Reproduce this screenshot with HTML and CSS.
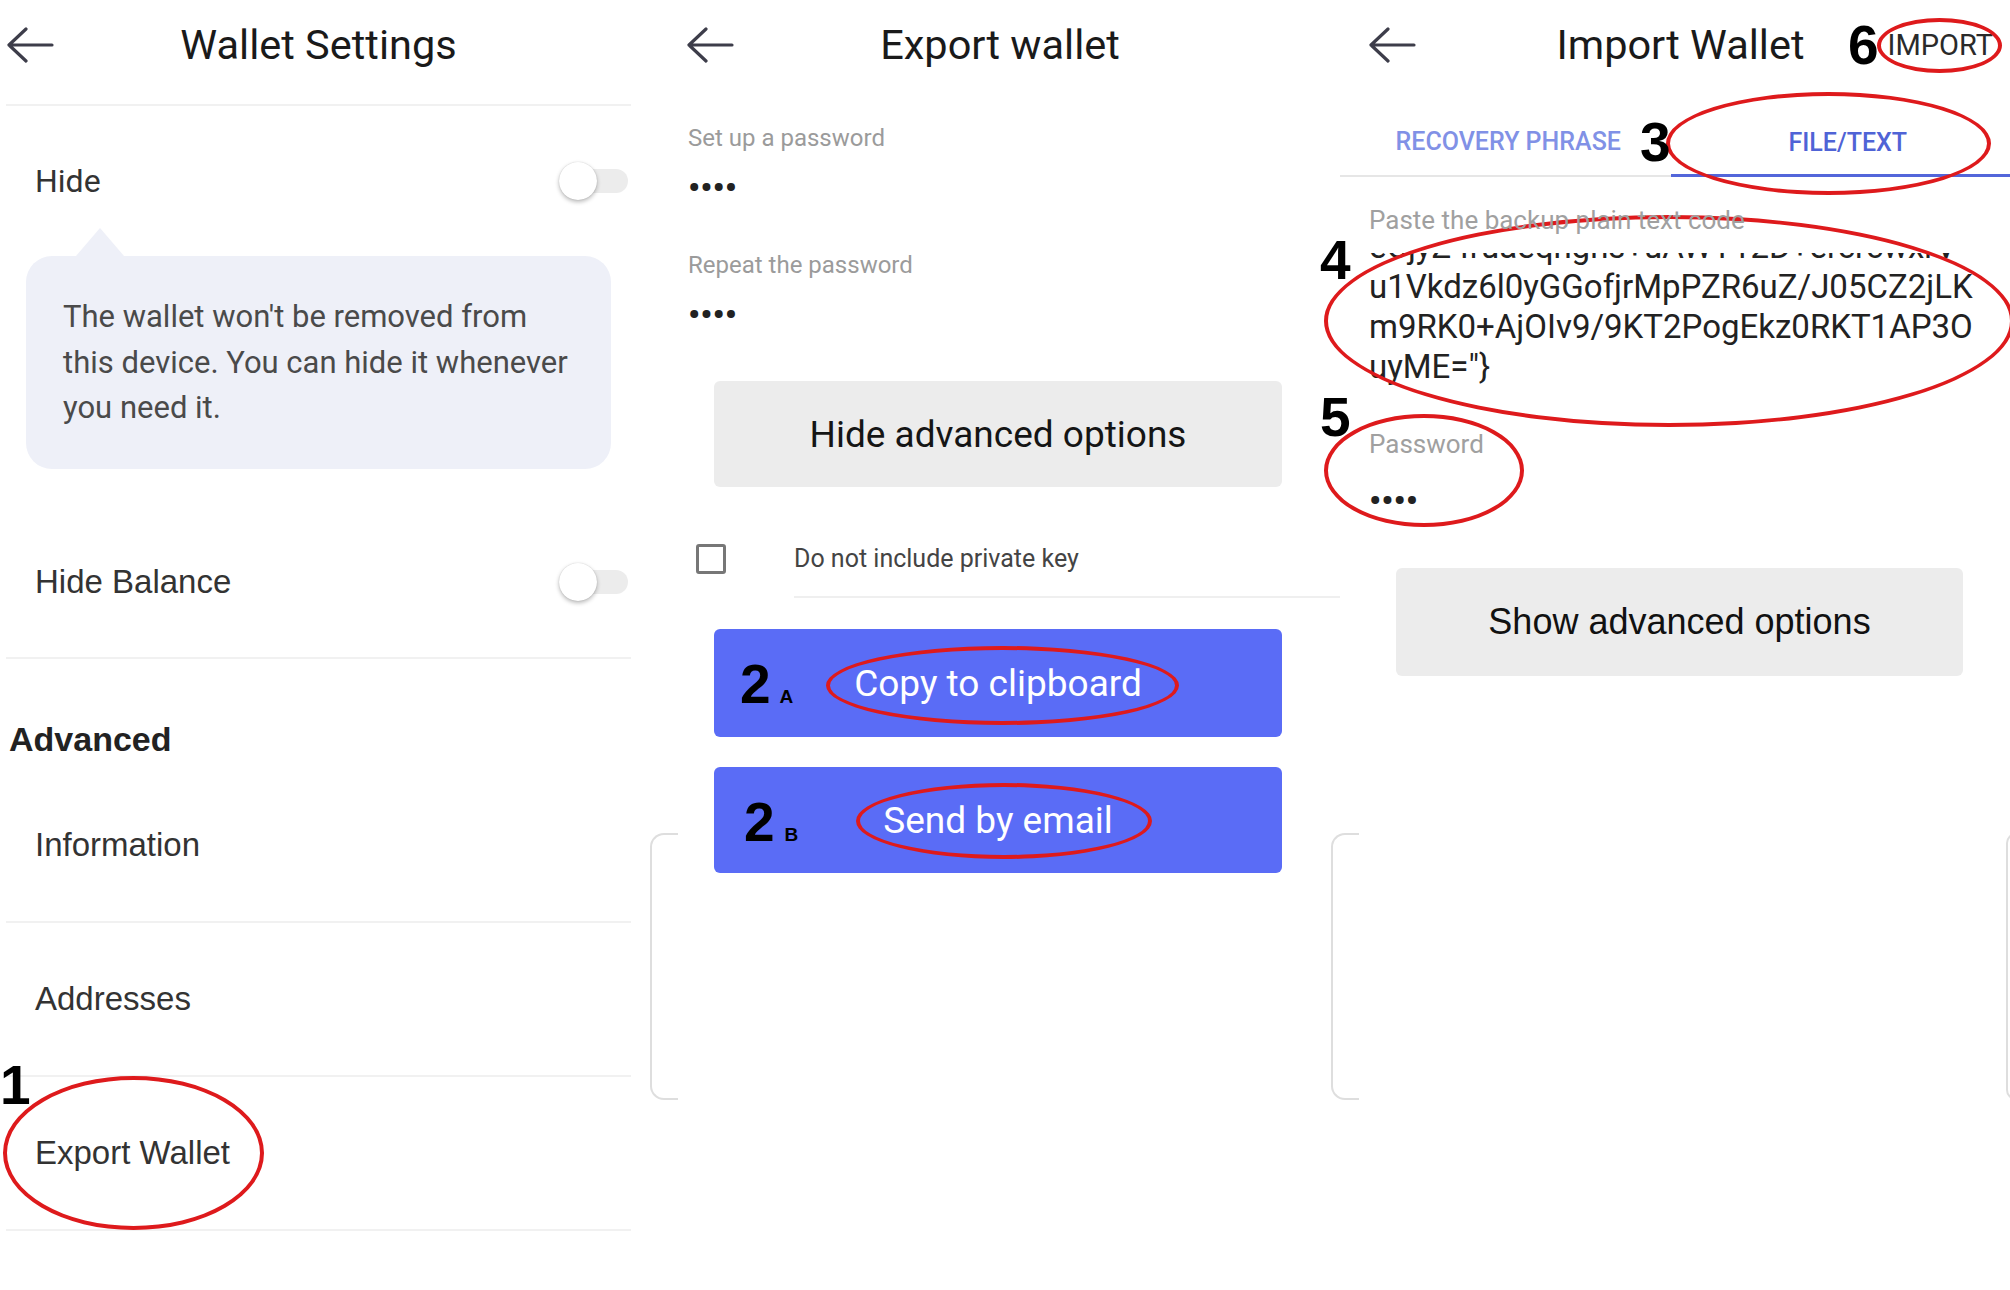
FILE: index.html
```html
<!DOCTYPE html>
<html lang="en">
<head>
<meta charset="utf-8">
<title>Wallet export / import</title>
<link rel="stylesheet" href="styles.css">
</head>
<body>
<div class="screens">

  <section class="panel p1">
    <header class="bar">
      <span class="back"><svg viewBox="0 0 48 36"><path d="M46 18H3M20 2L3 18L20 34"/></svg></span>
      <h1 class="title">Wallet Settings</h1>
      <span class="bar-end"></span>
    </header>
    <div class="rule-top"></div>

    <div class="row row-hide">
      <span>Hide</span>
      <span class="toggle"><span class="knob"></span></span>
    </div>
    <div class="tip">The wallet won't be removed from<br>this device. You can hide it whenever<br>you need it.</div>

    <div class="row row-setting">
      <span>Hide Balance</span>
      <span class="toggle"><span class="knob"></span></span>
    </div>

    <div class="section">Advanced</div>
    <div class="row row-link">Information</div>
    <div class="row row-link">Addresses</div>
    <div class="row row-link row-export">
      <span class="num n1">1</span>
      <span class="circled">Export Wallet<span class="ring ring-1"></span></span>
    </div>
  </section>

  <section class="panel p2">
    <header class="bar">
      <span class="back"><svg viewBox="0 0 48 36"><path d="M46 18H3M20 2L3 18L20 34"/></svg></span>
      <h1 class="title">Export wallet</h1>
      <span class="bar-end"></span>
    </header>

    <div class="fields">
      <div class="field">
        <div class="label">Set up a password</div>
        <div class="dots">••••</div>
      </div>
      <div class="field field-2">
        <div class="label">Repeat the password</div>
        <div class="dots">••••</div>
      </div>
    </div>

    <div class="btn btn-grey">Hide advanced options</div>

    <div class="check-row">
      <span class="checkbox"></span>
      <span class="check-text">Do not include private key</span>
    </div>

    <div class="btn btn-blue btn-copy">
      <span class="tag tag-a"><b>2</b><small>A</small></span>
      <span class="circled">Copy to clipboard<span class="ring ring-copy"></span></span>
    </div>
    <div class="btn btn-blue btn-send">
      <span class="tag tag-b"><b>2</b><small>B</small></span>
      <span class="circled">Send by email<span class="ring ring-send"></span></span>
    </div>
  </section>

  <section class="panel p3">
    <header class="bar">
      <span class="back"><svg viewBox="0 0 48 36"><path d="M46 18H3M20 2L3 18L20 34"/></svg></span>
      <h1 class="title">Import Wallet</h1>
      <span class="bar-end">
        <span class="num-inline">6</span>
        <span class="circled import">IMPORT<span class="ring ring-6"></span></span>
      </span>
    </header>

    <div class="tabs">
      <div class="tab">RECOVERY PHRASE</div>
      <div class="tab on">FILE/TEXT<span class="ring ring-3"></span></div>
      <span class="num n3">3</span>
    </div>

    <div class="fields3">
      <div class="code-field">
        <div class="label3">Paste the backup plain text code</div>
        <div class="code-box">
          <div class="code-text">
            <div>eCjyZ4ruaeqngns+uAWT12D+ercrcwxrV</div>
            <div>u1Vkdz6l0yGGofjrMpPZR6uZ/J05CZ2jLK</div>
            <div>m9RK0+AjOIv9/9KT2PogEkz0RKT1AP3O</div>
            <div>uyME="}</div>
          </div>
        </div>
        <span class="ring ring-4"></span>
        <span class="num n4">4</span>
      </div>

      <div class="pass-field">
        <div class="label3">Password</div>
        <div class="dots dots3">••••</div>
        <span class="ring ring-5"></span>
        <span class="num n5">5</span>
      </div>
    </div>

    <div class="btn btn-grey btn-show">Show advanced options</div>
  </section>

</div>
</body>
</html>
```

FILE: styles.css
```css
* { box-sizing: border-box; margin: 0; padding: 0; }

html, body { background: #ffffff; }

body {
  width: 2010px;
  height: 1290px;
  overflow: hidden;
  font-family: Roboto, "Liberation Sans", sans-serif;
  color: #1c1c1c;
}

.screens {
  display: flex;
  height: 1290px;
}

.panel {
  position: relative;
  flex: none;
}

.p1 { width: 660px; padding: 0 29px 0 6px; }
.p2 { width: 680px; }
.p3 { width: 670px; }

/* faint card edges visible behind the screens */
.p2::before,
.p3::before {
  content: "";
  position: absolute;
  top: 833px;
  height: 263px;
  width: 26px;
  border: 2px solid #dedede;
  border-right: none;
  border-radius: 14px 0 0 14px;
}
.p2::before { left: -10px; }
.p3::before { left: -9px; }
.p3::after {
  content: "";
  position: absolute;
  top: 833px;
  left: 666px;
  height: 263px;
  width: 10px;
  border: 2px solid #dedede;
  border-right: none;
  border-radius: 10px 0 0 10px;
}

/* ---------- header bar ---------- */
.bar {
  display: grid;
  grid-template-columns: 1fr auto 1fr;
  align-items: center;
  height: 90px;
}
.p2 .bar { padding: 0 26px; }
.p3 .bar { padding: 0 17px 0 28px; }

.back svg {
  display: block;
  width: 48px;
  height: 36px;
  fill: none;
  stroke: #3d3d4a;
  stroke-width: 3.2;
  stroke-linecap: round;
  stroke-linejoin: round;
}

.title {
  font-size: 41.5px;
  font-weight: 400;
  line-height: 48px;
  color: #1a1a1a;
  white-space: nowrap;
}

.bar-end {
  justify-self: end;
  display: flex;
  align-items: center;
  gap: 9px;
}

.rule-top {
  margin-top: 14px;
  height: 2px;
  background: #f1f1f1;
}

/* ---------- annotations ---------- */
.circled { position: relative; }

.ring {
  position: absolute;
  border: 4px solid #de1a1c;
  border-radius: 50%;
  pointer-events: none;
}

.num,
.num-inline,
.tag b {
  font-family: "Liberation Sans", Arial, sans-serif;
  font-weight: 700;
  font-size: 55px;
  line-height: 55px;
  color: #000;
}
.num { position: absolute; }

/* ---------- panel 1 ---------- */
.row {
  display: flex;
  align-items: center;
  justify-content: space-between;
  padding: 0 3px 0 29px;
}

.row-hide {
  height: 150px;
  font-size: 32px;
  color: #333;
}

.toggle {
  position: relative;
  width: 69px;
  height: 40px;
}
.toggle::before {
  content: "";
  position: absolute;
  right: 0;
  top: 8px;
  width: 62px;
  height: 24px;
  border-radius: 12px;
  background: #ececec;
}
.knob {
  position: absolute;
  left: 0;
  top: 1px;
  width: 38px;
  height: 38px;
  border-radius: 50%;
  background: #fff;
  box-shadow: 0 2px 4px rgba(0, 0, 0, 0.28), 0 0 1px rgba(0, 0, 0, 0.2);
}

.tip {
  position: relative;
  margin-left: 20px;
  width: 585px;
  padding: 38px 37px;
  background: #eef0f8;
  border-radius: 26px;
  font-size: 31px;
  line-height: 45.5px;
  color: #4a4a4a;
  white-space: nowrap;
}
.tip::before {
  content: "";
  position: absolute;
  left: 50px;
  top: -28px;
  border-left: 24px solid transparent;
  border-right: 24px solid transparent;
  border-bottom: 28px solid #eef0f8;
}

.row-setting {
  margin-top: 38px;
  height: 152px;
  border-bottom: 2px solid #f1f1f1;
  font-family: "Liberation Sans", Arial, sans-serif;
  font-size: 33px;
  color: #333;
}

.section {
  height: 110px;
  padding: 60px 0 0 3px;
  font-family: "Liberation Sans", Arial, sans-serif;
  font-weight: 700;
  font-size: 34px;
  line-height: 40px;
  color: #222;
}

.row-link {
  height: 154px;
  border-bottom: 2px solid #f1f1f1;
  font-family: "Liberation Sans", Arial, sans-serif;
  font-size: 33px;
  color: #333;
}

.row-export {
  position: relative;
  justify-content: flex-start;
}
.n1 { left: -6px; top: -19px; }
.ring-1 { left: -32px; right: -34px; top: -58px; bottom: -58px; }

/* ---------- panel 2 ---------- */
.fields { padding: 33px 0 0 28px; }

.label {
  font-size: 24px;
  line-height: 30px;
  color: #9b9b9b;
}
.dots {
  margin-top: 19px;
  font-size: 34px;
  font-weight: 700;
  line-height: 30px;
  color: #222;
}
.field-2 { margin-top: 48px; }

.btn {
  position: relative;
  display: flex;
  align-items: center;
  justify-content: center;
  width: 568px;
  margin-left: 54px;
  border-radius: 6px;
  font-size: 37px;
  white-space: nowrap;
}

.btn-grey {
  height: 106px;
  margin-top: 52px;
  background: #ececec;
  color: #151515;
}

.check-row {
  display: flex;
  align-items: center;
  height: 78px;
  margin-top: 33px;
}
.checkbox {
  flex: none;
  width: 30px;
  height: 30px;
  margin-left: 36px;
  border: 3px solid #777;
  border-radius: 3px;
}
.check-text {
  flex: 1;
  align-self: stretch;
  display: flex;
  align-items: center;
  margin-left: 68px;
  border-bottom: 2px solid #efefef;
  font-size: 25px;
  color: #444;
}

.btn-blue {
  background: #5a6cf6;
  color: #fff;
}
.btn-copy { height: 108px; margin-top: 31px; }
.btn-send { height: 106px; margin-top: 30px; }

.tag {
  position: absolute;
  display: flex;
  align-items: baseline;
}
.tag small {
  font-family: "Liberation Sans", Arial, sans-serif;
  font-weight: 700;
  font-size: 19px;
  color: #000;
}
.tag-a { left: 26px; top: 28px; gap: 9px; }
.tag-b { left: 30px; top: 28px; gap: 10px; }

.ring-copy { left: -28px; right: -37px; top: -16px; bottom: -20px; }
.ring-send { left: -27px; right: -39px; top: -16px; bottom: -17px; }

/* ---------- panel 3 ---------- */
.import {
  font-size: 29px;
  line-height: 34px;
  color: #2a2a2a;
}
.ring-6 { left: -11px; right: -9px; top: -10px; bottom: -11px; }

.tabs {
  position: relative;
  display: flex;
  margin-top: 17px;
}
.tab {
  position: relative;
  flex: 1;
  height: 70px;
  display: flex;
  align-items: center;
  justify-content: center;
  border-bottom: 2px solid #e6e6e6;
  font-size: 25px;
  font-weight: 500;
  color: #8191e6;
}
.tab:first-child { padding-left: 6px; }
.tab.on {
  padding: 3px 0 0 15px;
  border-bottom: 3px solid #5366da;
  color: #4f63d6;
}
.ring-3 { left: -5px; top: -15px; width: 325px; height: 103px; }
.n3 { left: 300px; top: 8px; }

.fields3 { padding-left: 29px; }

.label3 {
  position: relative;
  z-index: 1;
  font-size: 26px;
  line-height: 30px;
  color: #a0a0a0;
}

.code-field {
  position: relative;
  margin-top: 28px;
}
.code-box {
  margin-top: 18px;
  height: 135px;
  overflow: hidden;
}
.code-text {
  margin-top: -26px;
  font-size: 33px;
  line-height: 40px;
  color: #222;
  white-space: nowrap;
}
.ring-4 { left: -45px; top: 10px; width: 690px; height: 212px; }
.n4 { left: -49px; top: 28px; }

.pass-field {
  position: relative;
  margin-top: 41px;
}
.dots3 { margin-top: 26px; }
.ring-5 { left: -45px; top: -15px; width: 200px; height: 113px; }
.n5 { left: -49px; top: -39px; }

.btn-show {
  width: 567px;
  height: 108px;
  margin-top: 53px;
  margin-left: 56px;
  font-family: "Liberation Sans", Arial, sans-serif;
  font-size: 36px;
  color: #111;
}
```
